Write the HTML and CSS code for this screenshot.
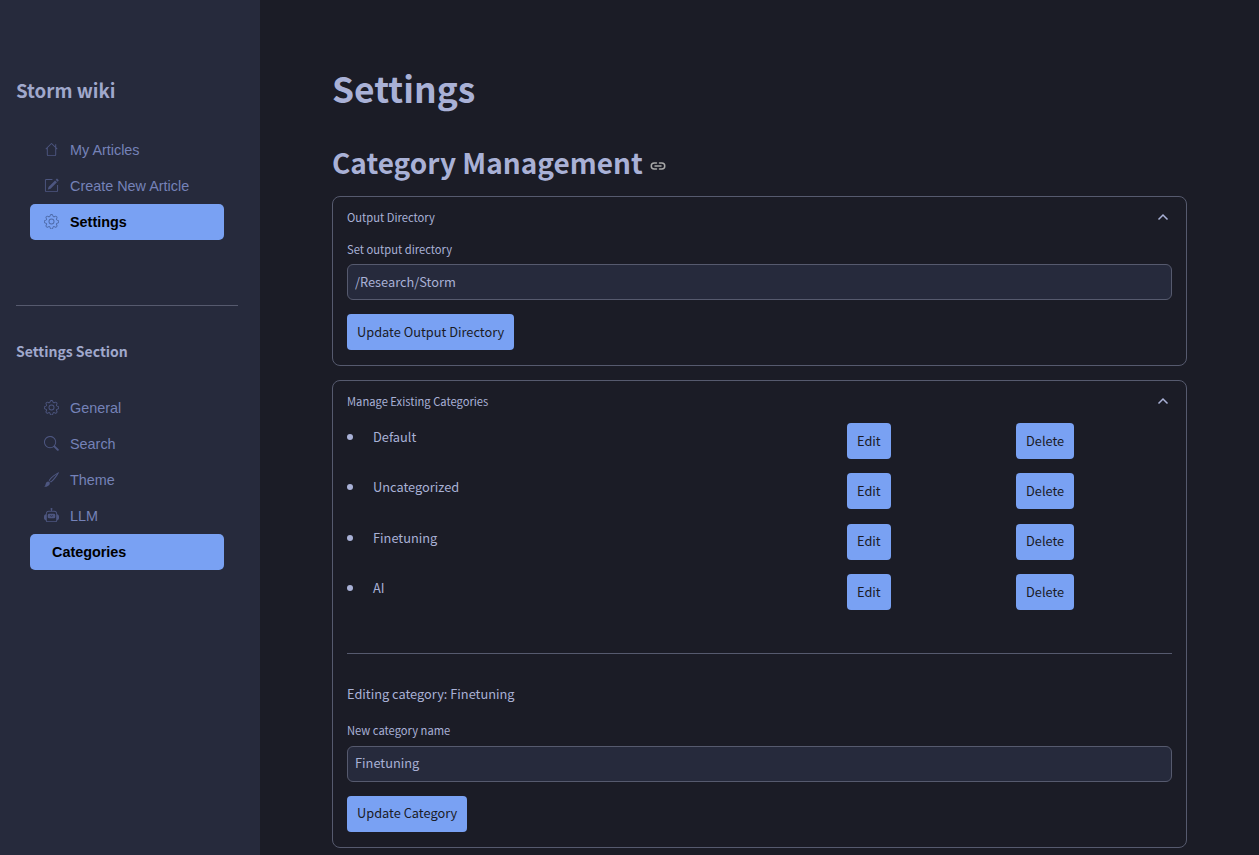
FILE: index.html
```html
<!DOCTYPE html>
<html lang="en">
<head>
    <meta charset="UTF-8">
    <meta name="viewport" content="width=device-width, initial-scale=1.0">
    <title>Settings</title>
    <link rel="stylesheet" href="styles.css">
</head>
<body>
    <aside class="sidebar">
        <h2 class="brand">Storm wiki</h2>
        <nav class="nav">
            <a class="nav-item"><svg class="nav-icon" viewBox="0 0 16 16"><path d="M8.7 1.5a1 1 0 0 0-1.4 0L1.6 7.2l.7.7L3 7.2v6.3A1.5 1.5 0 0 0 4.5 15h7a1.5 1.5 0 0 0 1.5-1.5V7.2l.7.7.7-.7L13 5.700V2.500h-1v2.200zM4 13.500V6.200l4-4 4 4v7.300a.5.5 0 0 1-.5.5h-7a.5.5 0 0 1-.5-.5z"/></svg>My Articles</a>
            <a class="nav-item"><svg class="nav-icon" viewBox="0 0 16 16"><path d="M15.500 2.100a.5.5 0 0 1 0 .7l-1 1.100-2-2 1-1.100a.5.5 0 0 1 .7 0zM13.800 4.600l-2-2-6.800 6.800a.5.5 0 0 0-.1.2l-.8 2.400a.3.3 0 0 0 .3.3l2.400-.8a.5.5 0 0 0 .2-.1z"/><path fill-rule="evenodd" d="M1 13.500A1.500 1.500 0 0 0 2.500 15h11a1.500 1.500 0 0 0 1.500-1.500v-6h-1v6a.5.5 0 0 1-.5.5h-11a.5.5 0 0 1-.5-.5v-11a.5.5 0 0 1 .5-.5H9V1H2.500A1.500 1.500 0 0 0 1 2.500z"/></svg>Create New Article</a>
            <a class="nav-item active"><svg class="nav-icon" viewBox="0 0 16 16"><path d="M8 4.800a3.200 3.200 0 1 0 0 6.400 3.200 3.200 0 0 0 0-6.400zM5.800 8a2.200 2.200 0 1 1 4.400 0 2.200 2.200 0 0 1-4.400 0z"/><path d="M9.800 1.300c-.5-1.700-3.100-1.700-3.600 0l-.1.300a.9.9 0 0 1-1.400.6l-.3-.2c-1.600-.8-3.400 1-2.600 2.600l.2.300a.9.9 0 0 1-.6 1.400l-.3.100c-1.700.5-1.700 3.100 0 3.600l.3.100a.9.9 0 0 1 .6 1.400l-.2.300c-.8 1.600 1 3.400 2.600 2.600l.3-.2a.9.9 0 0 1 1.400.6l.1.300c.5 1.700 3.100 1.700 3.600 0l.1-.3a.9.9 0 0 1 1.400-.6l.3.2c1.600.8 3.400-1 2.600-2.600l-.2-.3a.9.9 0 0 1 .6-1.400l.3-.1c1.700-.5 1.700-3.100 0-3.600l-.3-.1a.9.9 0 0 1-.6-1.400l.2-.3c.8-1.600-1-3.400-2.600-2.600l-.3.2a.9.9 0 0 1-1.400-.6zM7.100 1.600c.3-.8 1.500-.8 1.800 0l.1.300a1.900 1.900 0 0 0 2.800 1.200l.3-.2c.8-.4 1.600.4 1.200 1.200l-.2.300a1.900 1.900 0 0 0 1.200 2.800l.3.100c.8.300.8 1.500 0 1.800l-.3.100a1.900 1.900 0 0 0-1.200 2.800l.2.300c.4.800-.4 1.600-1.200 1.200l-.3-.2a1.900 1.900 0 0 0-2.800 1.200l-.1.300c-.3.800-1.500.8-1.800 0l-.1-.3a1.900 1.900 0 0 0-2.800-1.200l-.3.200c-.8.400-1.600-.4-1.200-1.200l.2-.3a1.900 1.900 0 0 0-1.200-2.800l-.3-.1c-.8-.3-.8-1.500 0-1.800l.3-.1a1.900 1.900 0 0 0 1.200-2.800l-.2-.3c-.4-.8.4-1.600 1.200-1.200l.3.200a1.900 1.900 0 0 0 2.800-1.200z"/></svg>Settings</a>
        </nav>
        <hr class="side-rule">
        <h3 class="side-heading">Settings Section</h3>
        <nav class="nav">
            <a class="nav-item"><svg class="nav-icon" viewBox="0 0 16 16"><path d="M8 4.800a3.200 3.200 0 1 0 0 6.400 3.200 3.200 0 0 0 0-6.400zM5.800 8a2.200 2.200 0 1 1 4.400 0 2.200 2.200 0 0 1-4.400 0z"/><path d="M9.800 1.300c-.5-1.700-3.100-1.700-3.600 0l-.1.300a.9.9 0 0 1-1.400.6l-.3-.2c-1.600-.8-3.400 1-2.600 2.600l.2.300a.9.9 0 0 1-.6 1.400l-.3.100c-1.700.5-1.700 3.100 0 3.600l.3.100a.9.9 0 0 1 .6 1.400l-.2.300c-.8 1.600 1 3.400 2.600 2.600l.3-.2a.9.9 0 0 1 1.400.6l.1.300c.5 1.700 3.100 1.700 3.600 0l.1-.3a.9.9 0 0 1 1.400-.6l.3.2c1.600.8 3.400-1 2.600-2.600l-.2-.3a.9.9 0 0 1 .6-1.400l.3-.1c1.700-.5 1.700-3.100 0-3.600l-.3-.1a.9.9 0 0 1-.6-1.400l.2-.3c.8-1.600-1-3.400-2.600-2.600l-.3.2a.9.9 0 0 1-1.400-.6zM7.100 1.600c.3-.8 1.500-.8 1.800 0l.1.300a1.900 1.900 0 0 0 2.800 1.200l.3-.2c.8-.4 1.600.4 1.200 1.200l-.2.300a1.900 1.900 0 0 0 1.200 2.800l.3.100c.8.300.8 1.500 0 1.800l-.3.100a1.900 1.900 0 0 0-1.200 2.800l.2.300c.4.800-.4 1.600-1.200 1.200l-.3-.2a1.900 1.900 0 0 0-2.800 1.200l-.1.300c-.3.800-1.500.8-1.800 0l-.1-.3a1.900 1.900 0 0 0-2.800-1.200l-.3.200c-.8.400-1.600-.4-1.200-1.200l.2-.3a1.900 1.900 0 0 0-1.200-2.800l-.3-.1c-.8-.3-.8-1.500 0-1.800l.3-.1a1.900 1.900 0 0 0 1.200-2.800l-.2-.3c-.4-.8.4-1.600 1.200-1.200l.3.200a1.900 1.900 0 0 0 2.800-1.200z"/></svg>General</a>
            <a class="nav-item"><svg class="nav-icon" viewBox="0 0 16 16"><path d="M11.700 10.300a6.500 6.500 0 1 0-1.400 1.400l3.900 3.900a1 1 0 0 0 1.400-1.400zM12 6.500a5.500 5.500 0 1 1-11 0 5.500 5.500 0 0 1 11 0z"/></svg>Search</a>
            <a class="nav-item"><svg class="nav-icon" viewBox="0 0 16 16"><path d="M15.800.2a.5.5 0 0 1 .1.6c-1.600 3.300-4.800 7.800-8 10l-.6.400-2.300-2.300.4-.6c2.200-3.200 6.700-6.400 10-8a.5.500 0 0 1 .4-.1zM6.100 9l1 1c2.300-1.800 5-5.100 6.700-7.900C11 3.900 7.900 6.700 6.100 9zM4.500 10.200c1 0 1.700.8 1.700 1.800 0 2.200-2.400 3.900-5.900 3.900.9-1 1.300-2 1.500-3 .3-1.500 1.300-2.700 2.700-2.700z"/></svg>Theme</a>
            <a class="nav-item"><svg class="nav-icon" viewBox="0 0 16 16"><path fill-rule="evenodd" d="M8.500 1.900a1 1 0 1 0-1 0V3H5C3.300 3 2 4.300 2 6v.6C.9 6.900 0 7.800 0 9v2c0 1.100.9 2 2 2.200v.3c0 .8.700 1.500 1.500 1.500h9c.8 0 1.500-.7 1.500-1.500v-.3c1.100-.2 2-1.100 2-2.200V9c0-1.200-.9-2.100-2-2.400V6c0-1.700-1.300-3-3-3H8.500zM3 6c0-1.100.9-2 2-2h6c1.100 0 2 .9 2 2v7.500a.5.500 0 0 1-.5.5h-9a.5.5 0 0 1-.5-.5zM4 7.500A1.500 1.500 0 0 1 5.500 6h5A1.500 1.500 0 0 1 12 7.500v2a1.500 1.500 0 0 1-1.500 1.500h-5A1.500 1.500 0 0 1 4 9.500zM6 8.500l.4.600.6-.5 1 .8 1-.8.6.5.4-.6-1-.8-1 .8-1-.8z"/></svg>LLM</a>
            <a class="nav-item active no-icon">Categories</a>
        </nav>
    </aside>

    <main class="main">
        <h1 class="page-title">Settings</h1>
        <h2 class="section-title">Category Management<svg class="link-icon" viewBox="0 0 24 24"><path d="M10 8H7a4 4 0 0 0 0 8h3M14 8h3a4 4 0 0 1 0 8h-3M8 12h8"/></svg></h2>

        <section class="panel">
            <div class="panel-head"><span>Output Directory</span><svg class="chevron" viewBox="0 0 16 16"><path d="M3.500 10.500 8 6l4.500 4.500"/></svg></div>
            <label class="field-label first" for="outputDir">Set output directory</label>
            <input class="text-input" id="outputDir" type="text" value="/Research/Storm">
            <button class="btn">Update Output Directory</button>
        </section>

        <section class="panel">
            <div class="panel-head"><span>Manage Existing Categories</span><svg class="chevron" viewBox="0 0 16 16"><path d="M3.500 10.500 8 6l4.500 4.500"/></svg></div>
            <ul class="cat-list">
                <li class="cat-row"><span class="cat-name">Default</span><span><button class="btn">Edit</button></span><span><button class="btn">Delete</button></span></li>
                <li class="cat-row"><span class="cat-name">Uncategorized</span><span><button class="btn">Edit</button></span><span><button class="btn">Delete</button></span></li>
                <li class="cat-row"><span class="cat-name">Finetuning</span><span><button class="btn">Edit</button></span><span><button class="btn">Delete</button></span></li>
                <li class="cat-row"><span class="cat-name">AI</span><span><button class="btn">Edit</button></span><span><button class="btn">Delete</button></span></li>
            </ul>
            <hr class="panel-rule">
            <p class="editing">Editing category: Finetuning</p>
            <label class="field-label second" for="catName">New category name</label>
            <input class="text-input" id="catName" type="text" value="Finetuning">
            <button class="btn">Update Category</button>
        </section>
    </main>
</body>
</html>
```

FILE: styles.css
```css
body {
    margin: 0;
    display: flex;
    height: 855px;
    overflow: hidden;
    background-color: #1b1c26;
    color: #a9b1d6;
    font-family: "Noto Sans CJK SC", "Noto Sans", sans-serif;
}

/* sidebar */
.sidebar {
    box-sizing: border-box;
    width: 260px;
    flex: none;
    padding: 76px 22px 0 16px;
    background-color: #262a3c;
}
.brand {
    margin: 0 0 28px;
    font-size: 18.7px;
    line-height: 28px;
    font-weight: 600;
    color: #a0a8cc;
}
.nav {
    display: flex;
    flex-direction: column;
    margin: 0 14px;
    font-family: "Liberation Sans", Arial, sans-serif;
}
.nav-item {
    display: flex;
    align-items: center;
    gap: 11px;
    height: 36px;
    padding: 0 14px;
    border-radius: 5px;
    font-size: 14.4px;
    color: #7582b8;
}
.nav-item.active {
    background-color: #79a1f3;
    color: #000;
    font-weight: 700;
}
.nav-item.no-icon {
    padding-left: 22px;
}
.nav-icon {
    width: 15px;
    height: 15px;
    flex: none;
    margin-top: -2px;
    fill: #4d5680;
}
.nav-item.active .nav-icon {
    fill: #4d6aa8;
}
.side-rule {
    margin: 65px 0 35px;
    border: none;
    border-top: 1px solid #565a6e;
}
.side-heading {
    margin: 0 0 29px;
    font-size: 14px;
    line-height: 20px;
    font-weight: 600;
    color: #a0a8cc;
}

/* main */
.main {
    flex: 1;
    min-width: 0;
    padding: 64px 72px 0;
}
.page-title {
    margin: 0 0 31px;
    font-size: 35.4px;
    line-height: 48px;
    font-weight: 700;
}
.section-title {
    display: flex;
    align-items: center;
    margin: 0 0 15px;
    font-size: 28px;
    line-height: 38px;
    font-weight: 600;
}
.link-icon {
    width: 18px;
    height: 18px;
    margin: 8px 0 0 6px;
    fill: none;
    stroke: #a9a9a9;
    stroke-width: 2;
    stroke-linecap: round;
}
.panel {
    margin-bottom: 14px;
    padding: 0 14px 15px;
    border: 1px solid #565a6e;
    border-radius: 8px;
}
.panel-head {
    display: flex;
    align-items: center;
    justify-content: space-between;
    height: 42px;
    padding-bottom: 2px;
    box-sizing: border-box;
    font-size: 11.2px;
}
.chevron {
    width: 16px;
    height: 16px;
    margin-right: 1px;
    fill: none;
    stroke: #a9b1d6;
    stroke-width: 1.5;
}
.field-label {
    display: block;
    margin-bottom: 8px;
    font-size: 11.2px;
    line-height: 14px;
}
.field-label.first {
    margin-top: 3px;
}
.field-label.second {
    margin-bottom: 9px;
}
.text-input {
    display: block;
    box-sizing: border-box;
    width: 100%;
    height: 36px;
    margin-bottom: 14px;
    padding: 0 7px 2px;
    border: 1px solid #565a6e;
    border-radius: 6px;
    background-color: #262a3c;
    color: #a9b1d6;
    font: inherit;
    font-size: 12.8px;
}
.btn {
    height: 36px;
    padding: 0 10px 2px;
    border: none;
    border-radius: 4px;
    background-color: #79a1f3;
    color: #1a1b26;
    font: inherit;
    font-size: 12.8px;
}

/* category rows */
.cat-list {
    margin: 0;
    padding: 0;
    list-style: none;
}
.cat-row {
    display: grid;
    grid-template-columns: 500px 169px auto;
    align-items: start;
    height: 50.4px;
    font-size: 12.8px;
}
.cat-name {
    display: flex;
    align-items: center;
    gap: 20px;
    line-height: 28px;
}
.cat-name::before {
    content: "";
    width: 6px;
    height: 6px;
    border-radius: 50%;
    background-color: #a9b1d6;
}
.panel-rule {
    margin: 28px 0 30px;
    border: none;
    border-top: 1px solid #565a6e;
}
.editing {
    margin: 0 0 19px;
    font-size: 12.8px;
    line-height: 20px;
}
```
